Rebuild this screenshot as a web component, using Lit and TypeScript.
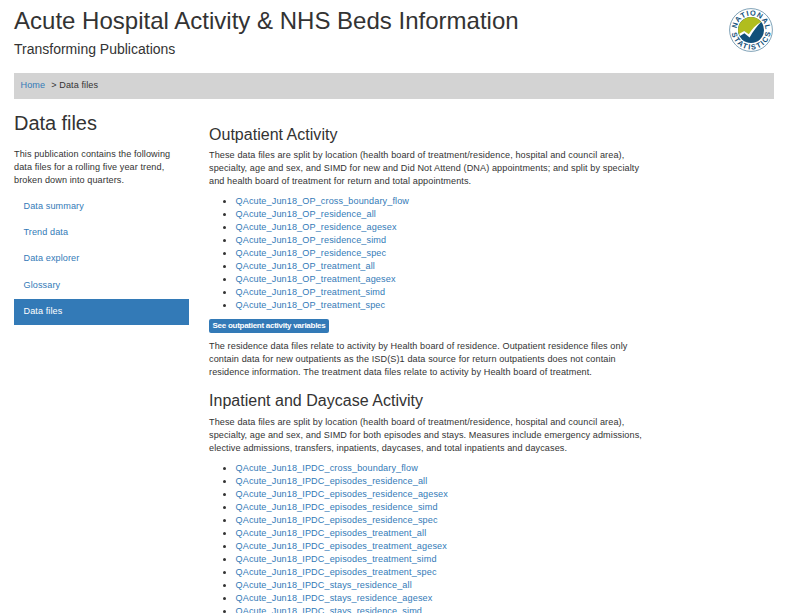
import { LitElement, html, css } from "lit";
import { customElement, property } from "lit/decorators.js";

@customElement("stats-logo")
export class StatsLogo extends LitElement {
  static styles = css`
    :host { display: block; width: 46px; height: 46px; }
    svg { display: block; }
    .ring { fill: #fff; stroke: #5f8aa5; stroke-width: 0.8; }
    .letters { font: bold 7.4px "Liberation Sans", Arial, sans-serif; fill: #12507a; }
  `;
  render() {
    return html`<svg width="46" height="46" viewBox="0 0 46 46" role="img" aria-label="National Statistics">
      <defs>
        <path id="top" d="M8.6 23 A14.4 14.4 0 0 1 37.4 23" />
        <path id="bottom" d="M3.4 23 A19.6 19.6 0 0 0 42.6 23" />
      </defs>
      <circle class="ring" cx="23" cy="23" r="21.4" />
      <circle cx="23" cy="23" r="13" fill="#12507a" />
      <path d="M11.2 28.5 A13 13 0 0 1 33.2 15 C28.5 18.5 24.5 22.5 21.3 28.5 L16.4 24.2 Z" fill="#b1bd1e" />
      <path d="M11.4 26.8 L16.2 24 L20.8 27.2 C23.5 22.5 28 17.8 33.2 14.8 C29 19.5 25 24.2 21.6 30.4 L16.4 26.2 L12 29 Z" fill="#fff" />
      <text class="letters"><textPath href="#top" startOffset="1.4" textLength="43">NATIONAL</textPath></text>
      <text class="letters"><textPath href="#bottom" startOffset="3.2" textLength="55.5">STATISTICS</textPath></text>
    </svg>`;
  }
}

@customElement("file-list")
export class FileList extends LitElement {
  @property({ attribute: false }) files: string[] = [];
  static styles = css`
    :host { display: block; }
    ul { margin: 0; padding: 0 0 0 26.5px; list-style: none; letter-spacing: 0.12px; }
    li { height: 13px; display: flex; align-items: center; position: relative; }
    li::before { content: ""; position: absolute; left: -12.5px; top: 5px; width: 3px; height: 3px; border-radius: 50%; background: #333; }
    a { color: #337ab7; text-decoration: none; white-space: nowrap; }
  `;
  render() {
    return html`<ul>${this.files.map((f) => html`<li><a href="#">QAcute_Jun18_${f}</a></li>`)}</ul>`;
  }
}

const outpatient = ["cross_boundary_flow", "residence_all", "residence_agesex", "residence_simd", "residence_spec", "treatment_all", "treatment_agesex", "treatment_simd", "treatment_spec"].map((n) => `OP_${n}`);
const inpatient = ["cross_boundary_flow", "episodes_residence_all", "episodes_residence_agesex", "episodes_residence_simd", "episodes_residence_spec", "episodes_treatment_all", "episodes_treatment_agesex", "episodes_treatment_simd", "episodes_treatment_spec", "stays_residence_all", "stays_residence_agesex", "stays_residence_simd"].map((n) => `IPDC_${n}`);
const pages = ["Data summary", "Trend data", "Data explorer", "Glossary", "Data files"];

@customElement("app-root")
export class AppRoot extends LitElement {
  static styles = css`
    :host { display: block; box-sizing: border-box; height: 613px; overflow: hidden; padding: 7px 15px 0 14px; background: #fff; color: #333; font: 9.1px/13px "Liberation Sans", Arial, sans-serif; letter-spacing: 0.1px; }
    h1, h2, h3, p { margin: 0; font-weight: 400; white-space: nowrap; }
    a { color: #337ab7; text-decoration: none; }
    header { display: flex; justify-content: space-between; height: 66px; letter-spacing: 0; }
    h1 { font-size: 24px; line-height: 27px; letter-spacing: 0.01px; }
    .sub { font-size: 14px; line-height: 18px; margin-top: 6px; }
    .crumbs { display: flex; align-items: center; height: 26px; box-sizing: border-box; padding: 0 6.5px 2px; background: #d3d3d3; gap: 6px; }
    .columns { display: grid; grid-template-columns: 175px 1fr; column-gap: 20px; }
    aside { padding-top: 13px; }
    aside p { letter-spacing: 0.09px; }
    h2 { font-size: 20px; line-height: 22px; margin-bottom: 14px; letter-spacing: -0.05px; }
    nav { display: flex; flex-direction: column; margin-top: 6.9px; }
    nav a { height: 26.3px; box-sizing: border-box; padding: 6px 9.5px; }
    nav .active { height: 26px; background: #337ab7; color: #fff; padding-top: 6.4px; }
    main { padding-top: 27px; }
    h3 { font-size: 16px; line-height: 18px; margin-bottom: 5px; letter-spacing: 0.02px; }
    file-list { margin-top: 7px; }
    .button { display: block; width: 120px; height: 14px; box-sizing: border-box; margin: 7px 0; padding: 0 0 1px; border: 0; border-radius: 2px; background: #337ab7; color: #fff; font: bold 8px/12px "Liberation Sans", Arial, sans-serif; letter-spacing: -0.27px; text-align: center; white-space: nowrap; }
    .second { margin: 13px 0 6px; }
  `;
  render() {
    return html`
      <header>
        <div><h1>Acute Hospital Activity &amp; NHS Beds Information</h1><p class="sub">Transforming Publications</p></div>
        <stats-logo></stats-logo>
      </header>
      <div class="crumbs"><a href="#">Home</a><span>&gt; Data files</span></div>
      <div class="columns">
        <aside>
          <h2>Data files</h2>
          <p>This publication contains the following<br />data files for a rolling five year trend,<br />broken down into quarters.</p>
          <nav>${pages.map((p, i) => html`<a href="#" class=${i === 4 ? "active" : ""}>${p}</a>`)}</nav>
        </aside>
        <main>
          <h3>Outpatient Activity</h3>
          <p>These data files are split by location (health board of treatment/residence, hospital and council area),<br />specialty, age and sex, and SIMD for new and Did Not Attend (DNA) appointments; and split by specialty<br />and health board of treatment for return and total appointments.</p>
          <file-list .files=${outpatient}></file-list>
          <button class="button">See outpatient activity variables</button>
          <p>The residence data files relate to activity by Health board of residence. Outpatient residence files only<br />contain data for new outpatients as the ISD(S)1 data source for return outpatients does not contain<br />residence information. The treatment data files relate to activity by Health board of treatment.</p>
          <h3 class="second">Inpatient and Daycase Activity</h3>
          <p>These data files are split by location (health board of treatment/residence, hospital and council area),<br />specialty, age and sex, and SIMD for both episodes and stays. Measures include emergency admissions,<br />elective admissions, transfers, inpatients, daycases, and total inpatients and daycases.</p>
          <file-list .files=${inpatient}></file-list>
        </main>
      </div>`;
  }
}
